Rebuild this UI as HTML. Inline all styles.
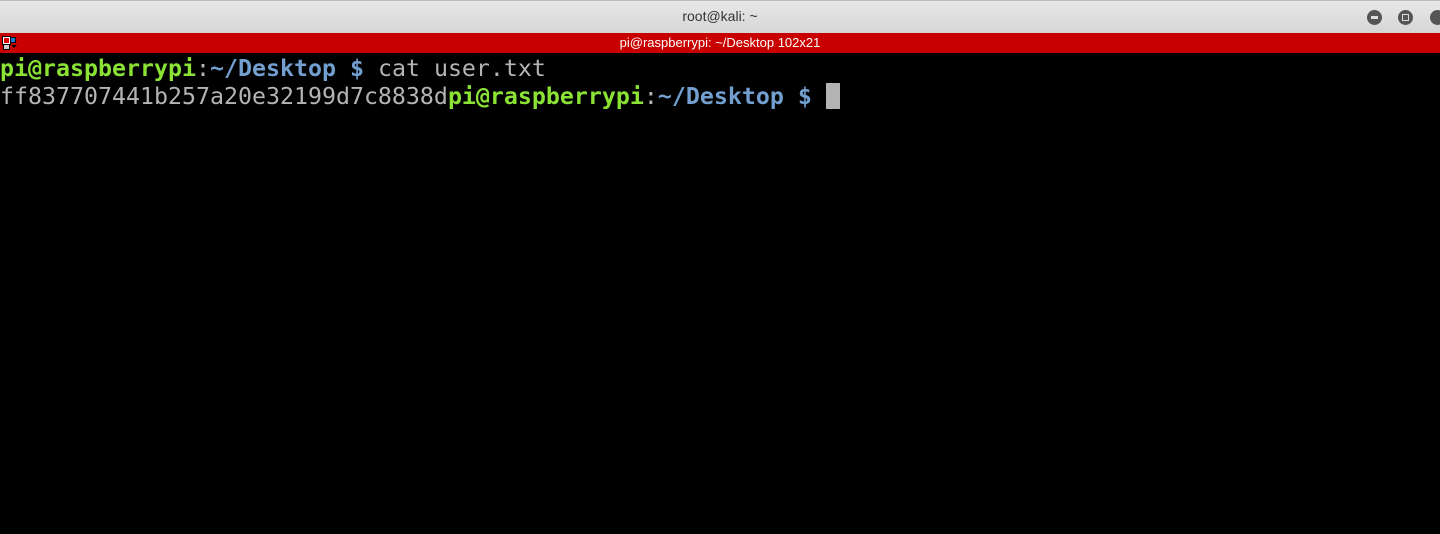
<!DOCTYPE html>
<html><head><style>
body{margin:0;width:1440px;height:534px;background:#000;overflow:hidden;position:relative;font-family:"Liberation Sans",sans-serif}
.tb{position:absolute;left:0;top:0;width:1440px;height:33px;background:linear-gradient(#e8e8e8,#d6d6d6);border-top:1px solid #bbb;box-sizing:border-box;text-align:center;font-size:14px;line-height:31px;color:#333}
.btn{position:absolute;top:9px;width:15px;height:15px;border-radius:50%;background:#555}
.rb{position:absolute;left:0;top:33px;width:1440px;height:20px;background:#c80000;color:#fff;font-size:13px;line-height:20px;text-align:center}
.term{position:absolute;left:0;top:55px;font-family:"DejaVu Sans Mono",monospace;font-size:23.25px;line-height:28px;color:#b4b4b4;white-space:pre}
.g{color:#8ae234;font-weight:bold}.b{color:#729fcf;font-weight:bold}
.cur{display:inline-block;width:14px;height:26px;background:#b4b4b4;vertical-align:-5px}
.ic{position:absolute;box-sizing:border-box}
</style></head><body>
<div class="tb">root@kali: ~
<div class="btn" style="left:1367px"><div style="position:absolute;left:4px;top:6px;width:7px;height:3px;background:#ddd"></div></div>
<div class="btn" style="left:1398px"><div style="position:absolute;left:4px;top:4px;width:5px;height:5px;border:1px solid #ddd"></div></div>
<div class="btn" style="left:1430px"></div>
</div>
<div class="rb">pi@raspberrypi: ~/Desktop 102x21
<div class="ic" style="left:3px;top:4px;width:7px;height:7px;background:#e00000;border:1px solid #fff;outline:1px solid #000"></div>
<div class="ic" style="left:10px;top:4px;width:6px;height:6px;background:#1e7ad6;border:1px solid #000"></div>
<div class="ic" style="left:3px;top:11px;width:7px;height:6px;background:#ccc;border:1px solid #000"></div>
<div class="ic" style="left:11px;top:12px;width:0;height:0;border-left:3px solid transparent;border-right:3px solid transparent;border-top:3px solid #000"></div>
</div>
<div class="term"><span class="g">pi@raspberrypi</span>:<span class="b">~/Desktop $</span> cat user.txt
ff837707441b257a20e32199d7c8838d<span class="g">pi@raspberrypi</span>:<span class="b">~/Desktop $</span> <span class="cur"></span></div>
</body></html>
